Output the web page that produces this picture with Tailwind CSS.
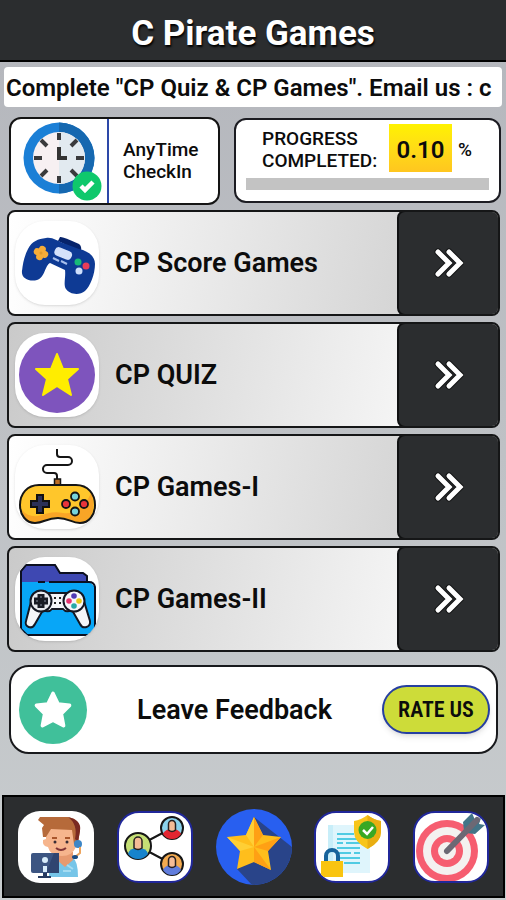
<!DOCTYPE html>
<html lang="en">
<head>
<meta charset="utf-8">
<meta name="viewport" content="width=device-width, initial-scale=1">
<title>C Pirate Games</title>
<script src="https://cdn.jsdelivr.net/npm/@tailwindcss/browser@4"></script>
</head>
<body class="flex min-h-screen flex-col bg-linear-to-b from-[#b4b6bc] to-[#c8ccce] font-['Roboto',sans-serif] text-[#0c0c0c]">
  <svg class="hidden" aria-hidden="true">
    <symbol id="chevrons" viewBox="0 0 30 30">
      <g fill="none" stroke-linecap="round" stroke-linejoin="miter">
        <path d="M4 4 15 15 4 26M15 4 26 15 15 26" stroke="#131415" stroke-width="7"/>
        <path d="M4 4 15 15 4 26M15 4 26 15 15 26" stroke="#fff" stroke-width="5"/>
      </g>
    </symbol>
    <symbol id="star" viewBox="0 0 48 48">
      <path d="M24 6 29.500 17.500 42 19 33 28 35.500 41 24 35 12.500 41 15 28 6 19 18.500 17.500Z" fill="currentColor" stroke="currentColor" stroke-width="4" stroke-linejoin="round"/>
    </symbol>
  </svg>

  <header class="flex h-[62px] items-center justify-center border-b-2 border-black bg-[#2b2d2f] pt-2">
    <h1 class="text-[35px] leading-10 font-bold text-white [text-shadow:1px_2px_2px_#000]">C Pirate Games</h1>
  </header>

  <p class="mx-1 mt-[5px] h-10 overflow-hidden rounded-sm bg-white px-[2px] text-2xl leading-[42px] font-semibold whitespace-nowrap">Complete "CP Quiz &amp; CP Games". Email us : c</p>

  <main class="flex flex-col">
    <section class="mt-[10px] mr-[5px] ml-[9px] flex items-start gap-[14px]">
      <button type="button" class="flex h-[88px] w-[211px] shrink-0 items-stretch overflow-hidden rounded-xl border-2 border-[#141414] bg-white text-left">
        <span class="flex w-[98px] items-center justify-end border-r-2 border-[#2d48a8] pr-[5px]">
          <svg class="size-20" viewBox="0 0 80 80" aria-hidden="true">
            <circle cx="37" cy="37" r="35.500" fill="#1b7fd6"/>
            <path d="M37 1.500a35.500 35.500 0 0 1 0 71Z" fill="#1668b0"/>
            <circle cx="37" cy="37" r="26" fill="#f7f0f2"/>
            <path d="M37 11a26 26 0 0 1 0 52Z" fill="#e2eaf0"/>
            <path d="M37 12v7M37 55v7M12 37h8M54 37h8M19 19l6 6M55 19l-6 6M19 55l6-6M49 49l6 6" stroke="#3a3a3c" stroke-width="4"/>
            <path d="M37 26v11h8" fill="none" stroke="#333" stroke-width="4"/>
            <circle cx="65" cy="65" r="14.500" fill="#0fc86c"/>
            <path d="M59 65l4 4 8-8" fill="none" stroke="#fff" stroke-width="4.500"/>
          </svg>
        </span>
        <span class="flex items-center pl-[14px] text-[19px] leading-[22px] font-medium">AnyTime<br>CheckIn</span>
      </button>
      <div class="mt-px flex h-[85px] flex-1 flex-col rounded-xl border-2 border-[#1c1c22] bg-white px-[10px] pt-1">
        <div class="flex items-center pl-4">
          <label for="progress" class="w-[127px] pt-1 text-[19px] leading-[22px] font-medium">PROGRESS<br>COMPLETED:</label>
          <span class="flex h-12 w-[63px] items-center justify-center bg-linear-to-b from-[#fff200] to-[#ffc61f] pt-1 text-2xl font-semibold">0.10</span>
          <span class="pt-1 pl-[6px] text-[19px] font-medium">%</span>
        </div>
        <progress id="progress" value="0.1" max="100" class="mt-[6px] block h-3 w-full appearance-none border-0 bg-[#c3c3c3] [&::-webkit-progress-bar]:bg-[#c3c3c3] [&::-webkit-progress-value]:bg-[#c3c3c3]"></progress>
      </div>
    </section>

    <nav class="mt-[5px] mr-[6px] ml-[7px] flex flex-col gap-[6px]" aria-label="Games">
      <a href="#score" class="flex h-[106px] overflow-hidden rounded-lg border-2 border-[#151617] bg-linear-[100deg] from-white to-[#cbcbcb]">
        <span class="flex flex-1 items-center gap-4 pl-[6px]">
          <svg class="size-[84px] rounded-[30px] bg-white shadow" viewBox="0 0 84 84" aria-hidden="true">
            <path d="M43 20 45 16Q47 15 64 23 67 25 66 31Z" fill="#06236b"/>
            <path d="M13 28C17 20 23 18 31 17 38 16 42 20 48 22L64 28C73 30 80 35 80 43 80 53 75 66 70 70 64 75 54 73 51 68 48 64 51 56 50 49L35 42C30 44 30 57 22 59 14 61 6 57 7 50 8 42 9 36 13 28Z" fill="#0e3a94"/>
            <rect x="39" y="28" width="18" height="9" rx="4" transform="rotate(22 48 33)" fill="#d4e1fa"/>
            <path d="M38 37l6 3M46 40l6 3" stroke="#a8bfec" stroke-width="2"/>
            <path d="M26 28v8M22 32h8" stroke="#f6ac38" stroke-width="7" stroke-linecap="round" transform="rotate(20 26 32)"/>
            <circle cx="26" cy="32" r="1.500" fill="#e39a2b"/>
            <circle cx="63" cy="41" r="3.500" fill="#17b978"/><circle cx="71" cy="45" r="3.500" fill="#e83d58"/><circle cx="64" cy="50" r="3.500" fill="#cfdffc"/>
          </svg>
          <span class="text-[27px] leading-8 font-semibold">CP Score Games</span>
        </span>
        <span class="-my-[2px] -mr-[2px] flex w-[103px] items-center justify-center rounded-lg border-2 border-[#101112] bg-[#2b2d2f]"><svg class="size-[30px]"><use href="#chevrons"/></svg></span>
      </a>

      <a href="#quiz" class="flex h-[106px] overflow-hidden rounded-lg border-2 border-[#151617] bg-linear-[100deg] from-[#cacaca] to-[#ffffff]">
        <span class="flex flex-1 items-center gap-4 pl-[6px]">
          <svg class="size-[84px] rounded-[30px] bg-white shadow" viewBox="0 0 84 84" aria-hidden="true">
            <circle cx="42" cy="42" r="38" fill="#7e54bd"/>
            <path d="M42 21 48 36 63 36 52 46 56 62 42 53 28 62 32 46 21 36 36 36Z" fill="#ffed00" stroke="#ffed00" stroke-width="2" stroke-linejoin="round"/>
          </svg>
          <span class="text-[27px] leading-8 font-semibold">CP QUIZ</span>
        </span>
        <span class="-my-[2px] -mr-[2px] flex w-[103px] items-center justify-center rounded-lg border-2 border-[#101112] bg-[#2b2d2f]"><svg class="size-[30px]"><use href="#chevrons"/></svg></span>
      </a>

      <a href="#games-1" class="flex h-[106px] overflow-hidden rounded-lg border-2 border-[#151617] bg-linear-[100deg] from-white to-[#cbcbcb]">
        <span class="flex flex-1 items-center gap-4 pl-[6px]">
          <svg class="size-[84px] rounded-[30px] bg-white shadow" viewBox="0 0 84 84" aria-hidden="true">
            <path d="M42 4v5q0 3 3 3h8a4 4 0 0 1 0 8H32a4 4 0 0 0 0 8h7q3 0 3 3v4" fill="none" stroke="#151515" stroke-width="2"/>
            <rect x="39.500" y="34" width="6" height="7" fill="#bd6d25" stroke="#151515" stroke-width="1.500"/>
            <path d="M24 40H61C73 40 80 49 80 60 80 70 74 78 65 78 56 78 54 73 43 73 31 73 29 78 20 78 11 78 5 70 5 60 5 49 12 40 24 40Z" fill="#ffc62b"/>
            <path d="M7 65C11 70 17 72 23 71 32 69 37 66 48 68 59 70 70 62 76 48 80 56 80 77 65 77 56 77 54 72 43 72 31 72 29 77 20 77 12 77 8 72 7 65Z" fill="#f9a526"/>
            <path d="M24 40H61C73 40 80 49 80 60 80 70 74 78 65 78 56 78 54 73 43 73 31 73 29 78 20 78 11 78 5 70 5 60 5 49 12 40 24 40Z" fill="none" stroke="#151515" stroke-width="2"/>
            <path d="M25 49v20M15 59h20" stroke="#111" stroke-width="8"/><path d="M25 51v16M17 59h16" stroke="#2b3158" stroke-width="4"/>
            <g stroke="#151515" stroke-width="1.800"><circle cx="51" cy="59" r="4" fill="#e8343b"/><circle cx="69" cy="59" r="4" fill="#e8343b"/><circle cx="60" cy="51.500" r="4" fill="#78d3dc"/><circle cx="60" cy="66.500" r="4" fill="#78d3dc"/></g>
          </svg>
          <span class="text-[27px] leading-8 font-semibold">CP Games-I</span>
        </span>
        <span class="-my-[2px] -mr-[2px] flex w-[103px] items-center justify-center rounded-lg border-2 border-[#101112] bg-[#2b2d2f]"><svg class="size-[30px]"><use href="#chevrons"/></svg></span>
      </a>

      <a href="#games-2" class="flex h-[106px] overflow-hidden rounded-lg border-2 border-[#151617] bg-linear-[100deg] from-[#cacaca] to-[#ffffff]">
        <span class="flex flex-1 items-center gap-4 pl-[6px]">
          <svg class="size-[84px] rounded-[30px] bg-white shadow" viewBox="0 0 84 84" aria-hidden="true">
            <path d="M6 30V14L11 8H40L45 16H68L72 19V30Z" fill="#3e48b2" stroke="#0c1020" stroke-width="2"/>
            <path d="M6 25H75L80 30V72L74 78H12L6 72Z" fill="#08a6f7"/>
            <path d="M6 25V72L12 78H74L80 72V30Q79 25 74 25H34M30 25h-7" fill="none" stroke="#0c1020" stroke-width="2"/>
            <path d="M26 36H59L68 41 75 64C76 70 68 73 65 67L57 53Q51 56 48 52H37Q34 56 28 53L20 67C17 73 9 70 11 64L17 41Z" fill="#f4f5f8" stroke="#141722" stroke-width="2"/>
            <circle cx="26" cy="44" r="10.500" fill="#e7e9ee" stroke="#141722" stroke-width="2"/><circle cx="59" cy="44" r="10.500" fill="#f6f6fa" stroke="#141722" stroke-width="2"/>
            <path d="M26 37v14M19 44h14" stroke="#181b24" stroke-width="7"/>
            <path d="M26 39v2M26 47v2M21 44h2M29 44h2" stroke="#505562" stroke-width="2"/>
            <circle cx="59" cy="39" r="2.800" fill="#503bb5"/><circle cx="54" cy="44" r="2.800" fill="#e83470"/><circle cx="64" cy="44" r="2.800" fill="#e6c918"/><circle cx="59" cy="49" r="2.800" fill="#25a9a6"/>
            <path d="M39 41h2M44 41h2M39 46h2M44 46h2" stroke="#222" stroke-width="2"/>
          </svg>
          <span class="text-[27px] leading-8 font-semibold">CP Games-II</span>
        </span>
        <span class="-my-[2px] -mr-[2px] flex w-[103px] items-center justify-center rounded-lg border-2 border-[#101112] bg-[#2b2d2f]"><svg class="size-[30px]"><use href="#chevrons"/></svg></span>
      </a>
    </nav>

    <section class="mt-[13px] mr-2 ml-[9px] flex h-[89px] items-center justify-between rounded-[20px] border-2 border-[#18191c] bg-white pr-[6px] pl-2">
      <span class="flex size-[68px] items-center justify-center rounded-full bg-[#40c09a] text-white"><svg class="size-[44px]" aria-hidden="true"><use href="#star"/></svg></span>
      <h2 class="text-[27px] leading-8 font-semibold">Leave Feedback</h2>
      <button type="button" class="h-[49px] w-[108px] rounded-full border-2 border-[#263fa0] bg-[#cddc39] text-[22px] font-semibold shadow-md font-['Roboto_Condensed','Liberation_Sans_Narrow',Roboto,sans-serif]">RATE US</button>
    </section>
  </main>

  <footer class="mt-auto mr-px mb-[2px] ml-[2px] flex h-[103px] items-center justify-between border-2 border-black bg-[#2b2d2f] px-[14px]">
    <a href="#support" aria-label="Support" class="h-[72px] w-[76px] overflow-hidden rounded-[22px] bg-white">
      <svg class="size-full" viewBox="0 0 76 72" aria-hidden="true">
        <path d="M31 66V56Q35 48 44 48L55 47Q60 50 60 66Z" fill="#76c5e8"/>
        <path d="M39 41H55V49L47 56 39 49Z" fill="#e79a70"/>
        <path d="M28 14H57Q60 24 58 36 54 45 44 45 32 45 30 36 24 35 25 29L28 28Z" fill="#f6b58d"/>
        <path d="M22 6H50Q62 8 62 19L60 33H56L54 19 33 18 28 26H25L24 17 26 14 20 9Z" fill="#b66a3a"/>
        <path d="M50 6Q64 9 62 20L60 31 57 28Q60 13 50 6Z" fill="#7a2a22"/>
        <path d="M34 27h5M47 27h5" stroke="#a9552b" stroke-width="2"/><circle cx="37" cy="31" r="1.500" fill="#382d35"/><circle cx="49" cy="31" r="1.500" fill="#382d35"/>
        <path d="M38 37q5 4 10 0" fill="none" stroke="#813536" stroke-width="2"/>
        <circle cx="60" cy="33" r="4" fill="#3d86c6"/><path d="M62 36v6l-5 4" fill="none" stroke="#eda45d" stroke-width="2"/><ellipse cx="57" cy="46" rx="3" ry="2" fill="#194b83"/>
        <rect x="13" y="42" width="28" height="20" rx="2" fill="#3c5582"/><path d="M36 42h5v20H28Z" fill="#304570"/>
        <circle cx="27" cy="49" r="3" fill="#d9edfb"/><path d="M25 55h4v6h-4Z" fill="#d9edfb"/>
        <path d="M25 62h4v3h4v2H20v-2h5Z" fill="#263a60"/>
        <path d="M49 54l6 4M45 60h8" stroke="#a5dcf2" stroke-width="2"/>
      </svg>
    </a>
    <a href="#share" aria-label="Share" class="h-[72px] w-[76px] overflow-hidden rounded-[22px] border-2 border-[#20279a] bg-white">
      <svg class="size-full" viewBox="2 2 72 68" aria-hidden="true">
        <path d="M21 35 55 17M21 35 55 53" stroke="#161616" stroke-width="2"/>
        <g stroke="#161616" stroke-width="2"><circle cx="21" cy="35" r="13" fill="#c5df75"/><circle cx="55" cy="17" r="11" fill="#8bd2ec"/><circle cx="55" cy="53" r="11" fill="#f3aa4f"/></g>
        <path d="M11 43Q12 37 21 37T31 43Q27 48 21 48T11 43Z" fill="#1683cc"/><path d="M46 23Q48 18 55 18T64 23Q61 28 55 28T46 23Z" fill="#e22631"/><path d="M46 59Q48 54 55 54T64 59Q61 64 55 64T46 59Z" fill="#617ddd"/>
        <g fill="#f5bc96" stroke="#262020" stroke-width="1.500"><path d="M17 37V30a4 4 0 0 1 8 0v7q-4 3-8 0ZM51.500 19v-6a3.500 3.500 0 0 1 7 0v6q-3.500 3-7 0ZM51.500 55v-6a3.500 3.500 0 0 1 7 0v6q-3.500 3-7 0Z"/></g>
      </svg>
    </a>
    <a href="#favourites" aria-label="Favourites" class="size-[76px] overflow-hidden rounded-full bg-[#285ff0]">
      <svg class="size-full" viewBox="0 0 76 76" aria-hidden="true">
        <path d="M38 8 76 38V76H36L21 60Z" fill="#294489"/>
        <path d="M38 8 47 26 65 28 52 42 55 61 38 53 21 60 24 42 11 28 30 26Z" fill="#ffbe1c"/>
        <path d="M38 8 47 26 38 38ZM65 28 52 42 38 38ZM55 61 38 53 38 38Z" fill="#ffa014"/>
        <path d="M38 8 30 26 38 38ZM11 28 24 42 38 38Z" fill="#ffcf35"/>
      </svg>
    </a>
    <a href="#privacy" aria-label="Privacy" class="h-[72px] w-[76px] overflow-hidden rounded-[22px] border-2 border-[#20279a] bg-white">
      <svg class="size-full" viewBox="2 2 72 68" aria-hidden="true">
        <path d="M14 14H46L56 24V62H14Z" fill="#dff5fc"/><path d="M14 14h5v48h-5Z" fill="#c8eef9"/>
        <path d="M23 23h17M23 28h20M23 32h6M32 32h14M23 37h23M23 42h14M40 42h6M23 47h23M30 52h16" stroke="#50cbe3" stroke-width="2"/>
        <path d="M53.500 4Q60 9 67 10V21Q67 31 53.500 38 40 31 40 21V10Q47 9 53.500 4Z" fill="#f7c51b"/><path d="M53.500 4Q60 9 67 10V21Q67 31 53.500 38Z" fill="#e9ae12"/>
        <circle cx="53.500" cy="19" r="9" fill="#38a824"/><path d="M49 19l4 4 6-7" fill="none" stroke="#fff" stroke-width="2.500"/>
        <path d="M12 51v-6a6 6 0 0 1 12 0v6" fill="none" stroke="#17639b" stroke-width="4"/><rect x="7" y="50" width="22" height="16" fill="#f9c410"/>
      </svg>
    </a>
    <a href="#goals" aria-label="Goals" class="h-[72px] w-[76px] rounded-[22px] border-2 border-[#20279a] bg-white">
      <svg class="size-full rounded-[20px]" viewBox="2 2 72 68" aria-hidden="true">
        <circle cx="34" cy="40" r="31" fill="#f65d70"/><circle cx="34" cy="40" r="24" fill="#f4f1f0"/><circle cx="34" cy="40" r="16" fill="#f65d70"/><circle cx="34" cy="40" r="9" fill="#f4f1f0"/>
        <path d="M51 20 50 11 59 2 62 9 68 7 66 13 72 14 62 23 53 22Z" fill="#437487"/>
        <path d="M34 40 64 9" stroke="#6c6874" stroke-width="6" stroke-linecap="round"/>
      </svg>
    </a>
  </footer>
</body>
</html>
